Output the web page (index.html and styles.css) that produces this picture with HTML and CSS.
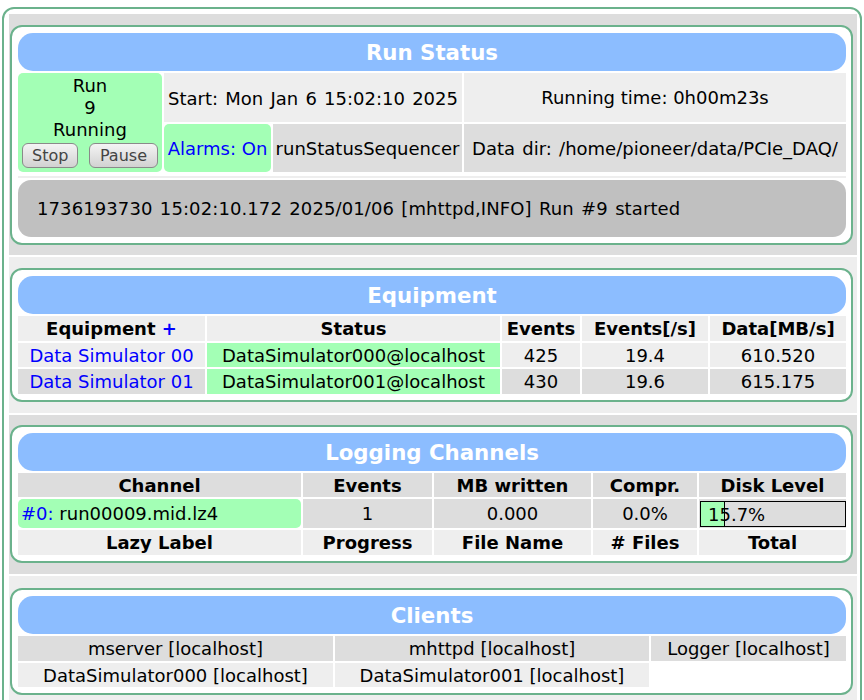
FILE: index.html
```html
<!DOCTYPE html>
<html>
<head>
<meta charset="utf-8">
<link rel="stylesheet" href="styles.css">
</head>
<body>
<div class="frame">

  <div class="section dark sec-run">
    <div class="box">
      <div class="hdr">Run Status</div>
      <div class="rs-grid">
        <div class="cell green rounded run">
          <div class="line">Run</div>
          <div class="line">9</div>
          <div class="line">Running</div>
          <div class="btns"><span class="btn">Stop</span><span class="btn">Pause</span></div>
        </div>
        <div class="cell light span2 wide">Start: Mon Jan 6 15:02:10 2025</div>
        <div class="cell light">Running time: 0h00m23s</div>
        <div class="cell green rounded link">Alarms: On</div>
        <div class="cell mid">runStatusSequencer</div>
        <div class="cell mid wide">Data dir: /home/pioneer/data/PCIe_DAQ/</div>
      </div>
      <div class="sep"></div>
      <div class="msgbar">1736193730 15:02:10.172 2025/01/06 [mhttpd,INFO] Run #9 started</div>
    </div>
  </div>

  <div class="section light sec-eq">
    <div class="box">
      <div class="hdr">Equipment</div>
      <div class="grid eq-grid">
        <div class="cell light th"><span>Equipment&nbsp;<span class="link">+</span></span></div>
        <div class="cell light th">Status</div>
        <div class="cell light th">Events</div>
        <div class="cell light th">Events[/s]</div>
        <div class="cell light th">Data[MB/s]</div>

        <div class="cell light link">Data Simulator 00</div>
        <div class="cell green">DataSimulator000@localhost</div>
        <div class="cell light">425</div>
        <div class="cell light">19.4</div>
        <div class="cell light">610.520</div>

        <div class="cell mid link">Data Simulator 01</div>
        <div class="cell green">DataSimulator001@localhost</div>
        <div class="cell mid">430</div>
        <div class="cell mid">19.6</div>
        <div class="cell mid">615.175</div>
      </div>
    </div>
  </div>

  <div class="section dark sec-log">
    <div class="box">
      <div class="hdr">Logging Channels</div>
      <div class="grid log-grid">
        <div class="cell mid th">Channel</div>
        <div class="cell mid th">Events</div>
        <div class="cell mid th">MB written</div>
        <div class="cell mid th">Compr.</div>
        <div class="cell mid th">Disk Level</div>

        <div class="cell green rounded left"><span><span class="link">#0:</span> run00009.mid.lz4</span></div>
        <div class="cell mid">1</div>
        <div class="cell mid">0.000</div>
        <div class="cell mid">0.0%</div>
        <div class="cell diskcell">
          <div class="diskbar"><div class="diskfill" style="width:15.7%"></div><span class="disktext">15.7%</span></div>
        </div>

        <div class="cell light th">Lazy Label</div>
        <div class="cell light th">Progress</div>
        <div class="cell light th">File Name</div>
        <div class="cell light th"># Files</div>
        <div class="cell light th">Total</div>
      </div>
    </div>
  </div>

  <div class="section light sec-cl">
    <div class="box">
      <div class="hdr">Clients</div>
      <div class="grid cl-grid">
        <div class="cell mid">mserver [localhost]</div>
        <div class="cell mid">mhttpd [localhost]</div>
        <div class="cell mid">Logger [localhost]</div>
        <div class="cell light">DataSimulator000 [localhost]</div>
        <div class="cell light">DataSimulator001 [localhost]</div>
        <div class="cell blank"></div>
      </div>
    </div>
  </div>

</div>
</body>
</html>
```
FILE: styles.css
```css
html, body {
  margin: 0;
  padding: 0;
  background: #ffffff;
}
body {
  font-family: "DejaVu Sans", Verdana, sans-serif;
  font-size: 18px;
  color: #000;
  overflow: hidden;
}
.frame {
  margin: 7px 2px 0 2px;
  border: 2px solid #6bb28c;
  border-radius: 12px;
  padding: 5px 3px 40px 5px;
  display: flex;
  flex-direction: column;
  gap: 2px;
  background: #fff;
}
.section {
  padding: 11px 4px 10px 1px;
}
.section.sec-eq { padding-bottom: 11px; }
.section.sec-log { padding-top: 10px; padding-bottom: 11px; }
.section.sec-cl { padding-top: 12px; }
.section.dark { background: #dddddd; }
.section.light { background: #eeeeee; }

.box {
  border: 2px solid #6bb28c;
  border-radius: 12px;
  background: #fff;
  padding: 6px 5px 6px 6px;
  display: flex;
  flex-direction: column;
  gap: 2px;
}
.hdr {
  height: 38px;
  background: #8cbdff;
  border-radius: 15px;
  color: #fff;
  font-weight: bold;
  font-size: 21.3px;
  display: flex;
  align-items: center;
  justify-content: center;
}

.cell {
  display: flex;
  align-items: center;
  justify-content: center;
  white-space: nowrap;
  overflow: hidden;
}
.cell.light { background: #eeeeee; }
.cell.mid { background: #dddddd; }
.cell.green { background: #a3ffb5; }
.cell.rounded { border-radius: 5px; }
.cell.left { justify-content: flex-start; padding-left: 3px; }
.cell.th { font-weight: bold; }
.cell.blank { background: #fff; }
.cell.wide { word-spacing: 1.5px; }
.link { color: #0000ff; }

.rs-grid {
  display: grid;
  grid-template-columns: 144px 107px 189px 382px;
  grid-template-rows: 49px 48px;
  gap: 2px;
}
.rs-grid .run {
  grid-row: 1 / span 2;
  flex-direction: column;
  justify-content: flex-start;
  align-items: stretch;
  padding-top: 2px;
}
.rs-grid .span2 { grid-column: 2 / span 2; padding-top: 2px; }
.line {
  height: 22px;
  line-height: 22px;
  text-align: center;
}
.btns {
  display: flex;
  justify-content: space-between;
  padding: 0 4px;
  margin-top: 2px;
}
.btn {
  display: inline-flex;
  align-items: center;
  height: 23px;
  padding: 0 9px;
  font-size: 16px;
  color: #444;
  border: 1px solid #8a8a8a;
  border-radius: 6px;
  background: linear-gradient(#f4f4f4, #d2d2d2);
}
.btn + .btn { padding: 0 10px; }
.sep {
  height: 2px;
  background: #eeeeee;
  margin-top: 2px;
}
.msgbar {
  height: 57px;
  background: #c0c0c0;
  border-radius: 13px;
  display: flex;
  align-items: center;
  padding-left: 19px;
  white-space: nowrap;
  word-spacing: 1.5px;
  letter-spacing: 0.1px;
}

.grid {
  display: grid;
  gap: 2px;
}
.eq-grid {
  grid-template-columns: 187px 293px 78px 126px 136px;
  grid-template-rows: 25px 24px 25px;
}
.log-grid {
  grid-template-columns: 283px 129px 157px 104px 147px;
  grid-template-rows: 24px 29px 25px;
}
.cl-grid {
  grid-template-columns: 315px 314px 195px;
  grid-template-rows: 25px 24px;
}

.diskcell {
  background: #dddddd;
  align-items: stretch;
  justify-content: stretch;
  padding: 2px 0 1px 1px;
}
.diskbar {
  position: relative;
  flex: 1;
  border: 1px solid #000;
  background: #dddddd;
  display: flex;
  align-items: center;
}
.diskfill {
  position: absolute;
  left: 0;
  top: 0;
  bottom: 0;
  background: #a3ffb5;
  border-right: 1px solid #000;
}
.disktext {
  position: relative;
  padding-left: 7px;
}
```
